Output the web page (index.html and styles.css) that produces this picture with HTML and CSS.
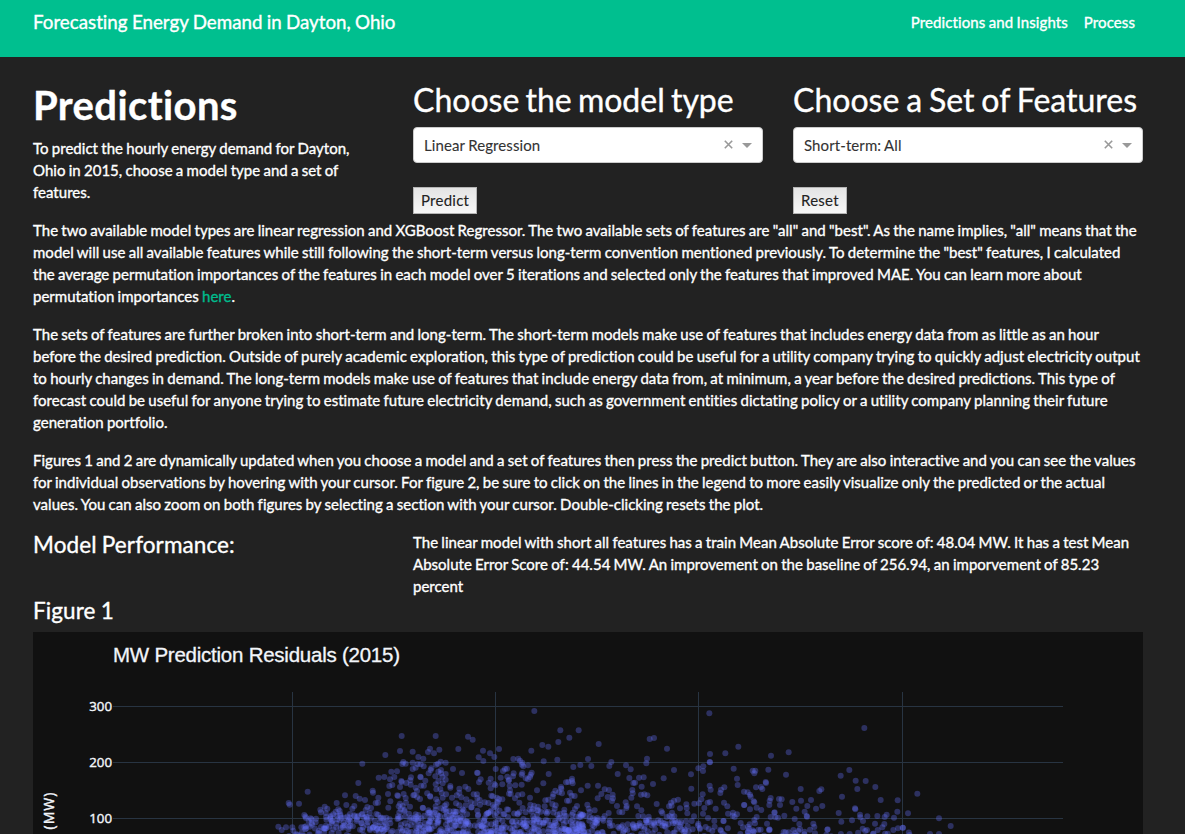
FILE: index.html
```
<!DOCTYPE html>
<html lang="en">
<head>
<meta charset="utf-8">
<title>Forecasting Energy Demand in Dayton, Ohio</title>
<link rel="stylesheet" href="styles.css">
</head>
<body>
<header class="navbar">
  <a class="brand">Forecasting Energy Demand in Dayton, Ohio</a>
  <nav class="nav"><a>Predictions and Insights</a><a>Process</a></nav>
</header>
<main class="container">
  <section class="row controls">
    <div>
      <h1>Predictions</h1>
      <p class="intro">To predict the hourly energy demand for Dayton, Ohio in 2015, choose a model type and a set of features.</p>
    </div>
    <div>
      <h2>Choose the model type</h2>
      <div class="select"><span class="value">Linear Regression</span><svg class="clear" width="9" height="9" viewBox="0 0 9 9"><path d="M.8 .8L8.2 8.2M8.2 .8L.8 8.2"/></svg><span class="arrow"></span></div>
      <button class="btn">Predict</button>
    </div>
    <div>
      <h2 class="features-title">Choose a Set of Features</h2>
      <div class="select"><span class="value">Short-term: All</span><svg class="clear" width="9" height="9" viewBox="0 0 9 9"><path d="M.8 .8L8.2 8.2M8.2 .8L.8 8.2"/></svg><span class="arrow"></span></div>
      <button class="btn">Reset</button>
    </div>
  </section>
  <section class="copy">
    <p>The two available model types are linear regression and XGBoost Regressor. The two available sets of features are "all" and "best". As the name implies, "all" means that the<br>model will use all available features while still following the short-term versus long-term convention mentioned previously. To determine the "best" features, I calculated<br>the average permutation importances of the features in each model over 5 iterations and selected only the features that improved MAE. You can learn more about<br>permutation importances <a class="link">here</a>.</p>
    <p>The sets of features are further broken into short-term and long-term. The short-term models make use of features that includes energy data from as little as an hour<br>before the desired prediction. Outside of purely academic exploration, this type of prediction could be useful for a utility company trying to quickly adjust electricity output<br>to hourly changes in demand. The long-term models make use of features that include energy data from, at minimum, a year before the desired predictions. This type of<br>forecast could be useful for anyone trying to estimate future electricity demand, such as government entities dictating policy or a utility company planning their future<br>generation portfolio.</p>
    <p>Figures 1 and 2 are dynamically updated when you choose a model and a set of features then press the predict button. They are also interactive and you can see the values<br>for individual observations by hovering with your cursor. For figure 2, be sure to click on the lines in the legend to more easily visualize only the predicted or the actual<br>values. You can also zoom on both figures by selecting a section with your cursor. Double-clicking resets the plot.</p>
  </section>
  <section class="performance">
    <h4>Model Performance:</h4>
    <p>The linear model with short all features has a train Mean Absolute Error score of: 48.04 MW. It has a test Mean<br>Absolute Error Score of: 44.54 MW. An improvement on the baseline of 256.94, an imporvement of 85.23<br>percent</p>
  </section>
  <h4 class="figure-title">Figure 1</h4>
  <svg class="plot" width="1110" height="202" viewBox="33 632 1110 202">
    <rect class="paper" x="33" y="632" width="1110" height="202"/>
    <path class="grid" d="M292.5 692V834M495.5 692V834M698.5 692V834M902.5 692V834M113 706.5H1063M113 762.5H1063M113 818.5H1063"/>
    <g id="points" class="points"></g>
    <text class="plot-title" x="113" y="662" textLength="287">MW Prediction Residuals (2015)</text>
    <text class="tick" x="112" y="711">300</text>
    <text class="tick" x="112" y="767">200</text>
    <text class="tick" x="112" y="823">100</text>
    <text class="axis" transform="translate(54 829.5) rotate(-90)" textLength="37">(MW)</text>
  </svg>
</main>
<script src="plot.js"></script>
</body>
</html>
```
FILE: styles.css
```
* { box-sizing: border-box; }
html, body { margin: 0; height: 834px; overflow: hidden; }
body {
  background: #222;
  color: #fff;
  font: 400 15px/22px Lato, "Liberation Sans", sans-serif;
  font-variant-ligatures: none;
  letter-spacing: .02px;
  word-spacing: -.6px;
  -webkit-text-stroke: .35px;
}
h1, h2, h4, p { margin: 0; }
h1 { font-size: 40px; line-height: 48px; font-weight: 700; margin-bottom: 8px; letter-spacing: .4px; }
h2 { font-size: 32px; line-height: 38px; font-weight: 400; margin-bottom: 8px; letter-spacing: 0; word-spacing: -2px; }
.features-title { word-spacing: -1.3px; }
h4 { font-size: 22.5px; line-height: 27px; font-weight: 400; letter-spacing: .1px; }

.navbar {
  height: 57px;
  background: #00bf8f;
  display: flex;
  justify-content: space-between;
  align-items: flex-start;
  padding: 11px 50px 0 33px;
}
.brand { font-size: 18.75px; letter-spacing: 0; word-spacing: -.5px; }
.nav { display: flex; gap: 16px; letter-spacing: .1px; }

.container { padding: 24px 42px 0 33px; }
.row { display: grid; grid-template-columns: 350px 350px 350px; gap: 30px; }
.controls { height: 138px; }
.intro { width: 335px; }
.select {
  height: 36px;
  background: #fff;
  border: 1px solid #ccc;
  border-radius: 4px;
  color: #333;
  display: flex;
  align-items: center;
  padding: 0 10px;
  letter-spacing: .1px;
  -webkit-text-stroke: .1px;
}
.value { flex: 1; }
.clear { margin: 0 9px 2px 0; fill: none; stroke: #999; stroke-width: 1.6; }
.arrow { border: 5px solid transparent; border-top-color: #999; border-bottom: 0; margin-top: 1px; }
.btn {
  display: block;
  height: 27px;
  margin-top: 24px;
  padding: 0 7px 2px;
  font: 15px/22px Lato, sans-serif;
  letter-spacing: .25px;
  color: #222;
  background: linear-gradient(#e4e4e4, #f7f7f7);
  border: 1px solid #b5b5b5;
  border-radius: 0;
  -webkit-text-stroke: .1px;
}
.copy p { margin-bottom: 16px; white-space: nowrap; }
.link { color: #00bc8c; }
.performance { display: grid; grid-template-columns: 350px 1fr; gap: 30px; height: 66px; white-space: nowrap; }
.figure-title { margin-bottom: 8px; }

.plot { display: block; -webkit-text-stroke: 0; letter-spacing: 0; word-spacing: 0; }
.paper { fill: #111; }
.grid { stroke: #283442; stroke-width: 1; fill: none; }
.points { fill: #636efa; fill-opacity: .34; }
.plot text { fill: #f2f5fa; }
.plot-title { font: 20.5px "Liberation Sans", Arial, sans-serif; stroke: #f2f5fa; stroke-width: .3px; }
.tick { font: 13.3px "Open Sans", sans-serif; text-anchor: end; stroke: #f2f5fa; stroke-width: .4px; }
.axis { font: 14px "Open Sans", sans-serif; stroke: #f2f5fa; stroke-width: .4px; }
```
FILE: plot.js
```
// Observations, in thirds of a pixel from each panel's left edge and y = 680.
const panels = [
  [260, "425,168 527,168 624,170 638,179 420,213 458,215 376,225 307,251 504,216 510,206 522,220 538,209 595,207 669,212 690,220 656,232 703,231 670,243 475,231 490,236 430,246 427,252 437,251 458,248 473,252 482,253 491,259 458,267 467,263 542,245 557,248 528,254 534,251 512,270 514,265 394,275 411,274 579,267 606,279 651,278 653,279 356,293 373,291 390,298 403,291 295,309 424,303 425,306 453,292 451,301 481,290 482,292 496,302 506,280 526,289 535,275 543,270 543,280 547,291 557,282 557,299 535,303 548,310 388,318 397,315 420,321 439,309 452,314 467,323 471,333 483,317 527,313 529,328 541,327 571,318 571,323 598,326 616,320 625,327 598,338 657,307 662,298 692,296 686,308 703,312 692,325 143,335 255,346 287,348 299,356 315,360 338,332 339,338 355,353 384,342 412,346 414,348 431,342 437,354 460,346 463,345 480,357 510,348 511,350 545,339 548,353 576,353 590,346 604,352 619,358 641,343 651,343 652,354 659,360 694,347 698,349 711,353 86,369 89,374 117,371 230,369 259,375 283,378 277,386 194,380 181,389 202,386 235,388 322,381 333,384 347,369 354,368 385,383 391,364 416,379 420,371 428,378 438,368 450,380 488,383 489,384 505,391 504,399 508,397 527,379 527,389 533,366 543,385 559,373 557,387 569,394 588,370 598,376 617,376 635,382 632,367 645,370 660,374 674,367 685,369 698,375 703,381 711,366 133,405 146,423 168,416 167,427 183,397 197,399 198,411 213,407 220,403 227,395 239,393 241,403 217,422 239,420 254,413 251,428 270,402 282,406 284,409 292,411 307,402 312,413 317,390 329,399 349,402 344,422 361,414 370,415 379,413 389,418 391,430 414,409 418,397 434,390 447,401 453,413 461,415 474,423 484,415 493,407 55,440 78,442 97,442 133,441 149,440 156,434 183,441 195,446 207,440 220,448 242,444 254,436 271,437 300,449 321,435 338,443 346,436 370,453 381,442 397,453 428,450 443,439"],
  [490, "133,93 658,100 211,151 266,151 238,173 205,186 157,195 175,200 326,192 479,177 492,174 531,206 124,212 27,207 70,237 85,236 90,242 97,248 96,254 100,259 114,256 161,244 202,239 294,237 364,246 358,258 304,258 271,255 250,261 176,282 471,236 469,250 408,256 422,268 383,282 418,294 447,293 461,292 435,308 430,309 455,320 489,312 521,295 552,270 603,283 604,326 660,222 659,246 660,247 640,259 639,273 625,265 17,267 39,273 45,267 51,266 71,280 69,289 52,290 32,293 57,299 56,302 97,279 95,284 125,278 122,284 120,291 107,295 114,298 16,316 37,313 59,317 60,331 76,316 95,314 160,310 228,307 235,306 246,296 246,303 248,310 293,317 324,317 213,321 214,326 196,332 207,337 216,340 190,342 188,350 141,331 120,353 97,343 84,345 273,331 240,338 245,347 254,348 231,362 237,362 357,330 344,328 334,342 323,355 353,351 368,344 369,355 366,363 427,330 428,340 424,353 453,344 463,343 472,346 500,372 441,379 454,391 381,378 407,367 410,378 409,384 397,397 388,396 543,368 545,377 552,362 564,359 570,385 537,379 589,373 590,384 613,371 638,343 634,358 627,370 659,317 662,329 660,366 653,368 643,384 677,386 292,374 296,386 314,391 299,396 261,378 255,387 223,389 222,398 197,376 194,386 187,372 175,359 166,361 164,379 167,395 144,380 132,377 121,374 119,388 107,397 88,368 75,355 62,342 57,341 37,358 27,357 24,368 514,394 517,399 530,411 546,398 553,409 592,400 612,409 639,401 654,414 673,423 356,399 344,408 338,416 322,414 314,419 300,412 287,408 272,411 258,410 246,404 476,410 459,409 445,408 492,427 506,429 469,422 464,440 463,448 358,429 360,438 384,440 398,436 406,448 412,450 429,433 430,441 573,426 570,440 560,447 546,422 549,430 535,433 524,438 588,424 605,423 625,431 629,444 647,441 667,453 608,448"],
  [720, "433,144 55,200 16,220 153,227 206,217 41,266 98,272 106,272 103,280 145,269 198,284 51,296 53,315 13,322 3,329 1,339 137,306 138,309 108,322 123,321 127,327 72,335 83,337 90,344 92,350 101,364 103,367 152,354 149,362 148,375 177,357 185,358 180,375 217,366 242,327 304,328 298,333 243,362 273,360 262,378 288,386 307,378 229,386 254,395 388,270 362,287 407,302 437,303 412,327 366,350 466,321 482,360 533,361 592,341 405,385 406,388 356,399 396,421 420,404 421,412 429,423 442,409 472,408 500,404 494,411 522,413 532,395 564,400 657,415 692,438 364,425 12,368 22,379 72,375 73,375 90,388 110,383 124,390 163,398 164,397 193,407 174,413 166,412 152,411 110,411 103,420 105,430 89,433 87,446 62,429 69,442 39,398 38,407 51,403 44,411 24,401 10,423 11,423 1,449 141,431 122,449 115,449 148,448 149,449 191,456 224,417 238,432 260,408 261,410 280,431 283,441 270,449 323,448 322,449 240,447 235,453 225,459 206,457 428,446 441,450 436,453 465,431 493,432 487,442 473,450 520,450 534,445 548,443 549,443 389,462 459,462 569,465 630,462 657,462 3,452 61,462"]
];
const group = document.getElementById("points");
function dot(x, y) {
  const c = document.createElementNS("http://www.w3.org/2000/svg", "circle");
  c.setAttribute("cx", x.toFixed(2));
  c.setAttribute("cy", y.toFixed(2));
  c.setAttribute("r", 3);
  group.appendChild(c);
}
for (const [left, list] of panels) {
  for (const pair of list.split(" ")) {
    const [x, y] = pair.split(",").map(Number);
    dot(left + x / 3, 680 + y / 3);
  }
}
// Dense band near the axis: [x from, x to, y from, count]
let seed = 17;
const random = () => (seed = (seed * 16807) % 2147483647) / 2147483647;
const bands = [
  [276, 300, 830, 6], [300, 345, 815, 40], [345, 400, 814, 50],
  [400, 450, 808, 75], [415, 450, 775, 14], [450, 500, 805, 100],
  [500, 545, 807, 85], [545, 585, 811, 75], [560, 584, 820, 20],
  [585, 640, 818, 38], [640, 700, 816, 40], [700, 760, 825, 16],
  [760, 830, 827, 14], [830, 910, 831, 8]
];
for (const [x0, x1, y0, count] of bands) {
  for (let i = 0; i < count; i++) {
    const t = Math.pow(random(), 0.75);
    dot(x0 + random() * (x1 - x0), y0 + t * (837 - y0));
  }
}
```
